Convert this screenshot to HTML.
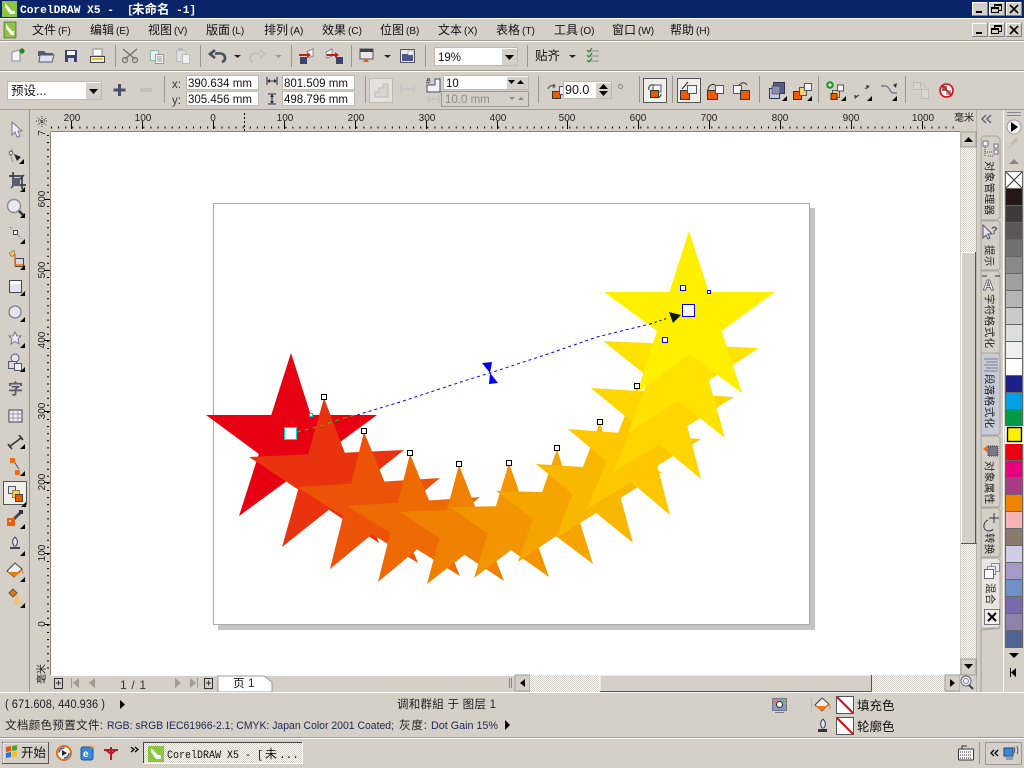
<!DOCTYPE html>
<html><head><meta charset="utf-8"><title>CorelDRAW X5</title>
<style>
html,body{margin:0;padding:0;background:#d4d0c8;overflow:hidden}
svg{display:block}
text{font-family:"Liberation Sans","WenQuanYi Zen Hei","Noto Sans CJK SC",sans-serif;font-size:12px;fill:#111}
.m{font-family:"Liberation Mono","WenQuanYi Zen Hei","Noto Sans CJK SC",monospace}
.mn text{font-size:12px}
.k{font-size:10px}
.r text{font-size:10px;fill:#222}
.f{font-size:11.5px;fill:#111}
.v text{font-size:10.5px;fill:#222;letter-spacing:.4px}
</style></head><body>
<svg xmlns="http://www.w3.org/2000/svg" width="1024" height="768" viewBox="0 0 1024 768">
<defs>
<pattern id="dith" width="2" height="2" patternUnits="userSpaceOnUse"><rect width="2" height="2" fill="#fff"/><rect width="1" height="1" fill="#d4d0c8"/><rect x="1" y="1" width="1" height="1" fill="#d4d0c8"/></pattern>
<g id="wbtn"><rect width="16" height="14" fill="#808080"/><rect width="15" height="13" fill="#fff"/><rect x="1" y="1" width="14" height="12" fill="#d4d0c8"/></g>
<g id="nofill"><rect x=".5" y=".5" width="17" height="17" fill="#fff" stroke="#555"/><path d="M1,1L17,17" stroke="#c8141c" stroke-width="2"/></g>
<g id="corner"><path d="M5,0V5H0Z" fill="#000"/></g>
</defs>
<rect width="1024" height="768" fill="#d4d0c8"/>

<!-- title bar -->
<rect width="1024" height="18" fill="#0a246a"/>
<rect x="2" y="1" width="15" height="16" fill="#8cc63f"/><path d="M5,3L12,11L15,11L15,14L10,14L5,7Z" fill="#fff"/>
<text x="20" y="13" class="m" style="font-size:11.2px;font-weight:bold;fill:#fff">CorelDRAW X5 -</text>
<text x="127" y="13" class="m" style="font-size:11.2px;font-weight:bold;fill:#fff">[</text>
<text x="132" y="13.5" style="font-size:12.5px;font-weight:bold;fill:#fff">未命名</text>
<text x="176" y="13" class="m" style="font-size:11.2px;font-weight:bold;fill:#fff">-1]</text>
<use href="#wbtn" x="972" y="2"/><use href="#wbtn" x="989" y="2"/><use href="#wbtn" x="1006" y="2"/>
<rect x="976" y="11" width="6" height="2" fill="#000"/>
<rect x="994.500" y="4.500" width="7" height="6" fill="none" stroke="#000"/><rect x="994" y="4" width="8" height="2" fill="#000"/><rect x="991.500" y="7.500" width="7" height="5" fill="#d4d0c8" stroke="#000"/><rect x="991" y="7" width="8" height="2" fill="#000"/>
<path d="M1010,5l8,8M1018,5l-8,8" stroke="#000" stroke-width="1.6"/>

<!-- menu bar -->
<rect y="18" width="1024" height="1" fill="#fff"/>
<rect x="4" y="22" width="12" height="16" fill="#8cc63f" stroke="#444" stroke-width=".6"/><path d="M6,24L12,31L14,31L14,35L11,35L6,28Z" fill="#fff"/>
<g class="mn">
<text x="32" y="34">文件<tspan class="k" dx="2">(F)</tspan></text>
<text x="90" y="34">编辑<tspan class="k" dx="2">(E)</tspan></text>
<text x="148" y="34">视图<tspan class="k" dx="2">(V)</tspan></text>
<text x="206" y="34">版面<tspan class="k" dx="2">(L)</tspan></text>
<text x="264" y="34">排列<tspan class="k" dx="2">(A)</tspan></text>
<text x="322" y="34">效果<tspan class="k" dx="2">(C)</tspan></text>
<text x="380" y="34">位图<tspan class="k" dx="2">(B)</tspan></text>
<text x="438" y="34">文本<tspan class="k" dx="2">(X)</tspan></text>
<text x="496" y="34">表格<tspan class="k" dx="2">(T)</tspan></text>
<text x="554" y="34">工具<tspan class="k" dx="2">(O)</tspan></text>
<text x="612" y="34">窗口<tspan class="k" dx="2">(W)</tspan></text>
<text x="670" y="34">帮助<tspan class="k" dx="2">(H)</tspan></text>
</g>
<use href="#wbtn" x="972" y="23"/><use href="#wbtn" x="989" y="23"/><use href="#wbtn" x="1006" y="23"/>
<rect x="976" y="32" width="6" height="2" fill="#000"/>
<rect x="994.500" y="25.500" width="7" height="6" fill="none" stroke="#000"/><rect x="994" y="25" width="8" height="2" fill="#000"/><rect x="991.500" y="28.500" width="7" height="5" fill="#d4d0c8" stroke="#000"/><rect x="991" y="28" width="8" height="2" fill="#000"/>
<path d="M1010,26l8,8M1018,26l-8,8" stroke="#000" stroke-width="1.6"/>
<rect y="40" width="1024" height="1" fill="#a09c94"/><rect y="41" width="1024" height="1" fill="#fff"/>
<rect y="70" width="1024" height="1" fill="#a09c94"/><rect y="71" width="1024" height="1" fill="#fff"/>
<rect y="109" width="1024" height="1" fill="#a09c94"/><rect y="110" width="1024" height="1" fill="#f4f2ec"/>

<!-- separators -->
<g fill="#fff" stroke="#a09c94" stroke-width="0">
<path d="M115,45h1v22h-1zM200,45h1v22h-1zM291,45h1v22h-1zM351,45h1v22h-1zM425,45h1v22h-1zM527,45h1v22h-1z" fill="#9a968e"/>
<path d="M164,76h1v27h-1zM365,76h1v27h-1zM538,76h1v27h-1zM639,76h1v27h-1zM672,76h1v27h-1zM759,76h1v27h-1zM818,76h1v27h-1zM905,76h1v27h-1z" fill="#9a968e"/>
</g>

<!-- standard toolbar icons -->
<path d="M12,52l8,-2v11h-8z" fill="#f4f4f6" stroke="#8a8aa0"/><circle cx="22" cy="51" r="2.6" fill="#1f8a1f"/>
<path d="M38,51h6l2,2h7v3h-15z" fill="#555a78"/><path d="M39,62h13l2,-7h-14z" fill="#dfe1ec" stroke="#555a78"/>
<rect x="65" y="50" width="12" height="12" fill="#3d4266"/><rect x="67" y="51" width="8" height="4" fill="#fff"/><rect x="68" y="58" width="6" height="4" fill="#cfd0dc"/>
<rect x="93" y="49" width="9" height="7" fill="#fff" stroke="#888"/><rect x="90.500" y="56.500" width="14" height="6" fill="#eee" stroke="#444"/><rect x="92" y="58" width="11" height="2" fill="#e8c040"/>
<path d="M123,49l12,10M137,49l-12,10" stroke="#777" stroke-width="1.4"/><circle cx="125" cy="60" r="2.500" fill="none" stroke="#777" stroke-width="1.3"/><circle cx="135" cy="60" r="2.500" fill="none" stroke="#777" stroke-width="1.3"/>
<rect x="150.500" y="50.500" width="8" height="10" fill="#e8f0ee" stroke="#8fb8b0"/><rect x="155.500" y="54.500" width="8" height="9" fill="#f2f2f2" stroke="#999"/><path d="M157,57h5M157,59h5M157,61h5" stroke="#999"/>
<rect x="176.500" y="50.500" width="9" height="11" fill="#ddd" stroke="#bbb"/><rect x="178" y="48" width="5" height="3" fill="#bbb"/><rect x="182.500" y="54.500" width="7" height="9" fill="#f2f2f2" stroke="#bbb"/>
<path d="M222,62c3,-1 4,-4 2,-7c-2,-2 -6,-2 -9,-1M215,50l-5,4l5,4" fill="none" stroke="#4a4e5e" stroke-width="2.600"/>
<path d="M234,55h7l-3.500,3z" fill="#222"/>
<path d="M253,62c-3,-1 -4,-4 -2,-7c2,-2 6,-2 9,-1M260,50l5,4l-5,4" fill="none" stroke="#c2c2bc" stroke-width="2.600"/>
<path d="M275,55h7l-3.500,3z" fill="#999"/>
<rect x="300" y="57" width="7" height="7" fill="#3d4266"/><path d="M306,52l7,-3v7l-5,2" fill="#fff" stroke="#888"/><path d="M299,54h8v-2l4,3l-4,3v-2h-8z" fill="#d01818"/>
<rect x="336" y="57" width="7" height="7" fill="#3d4266"/><path d="M326,52l6,-3v7l-5,2z" fill="#fff" stroke="#888"/><path d="M327,54h8v-2l4,3l-4,3v-2h-8z" fill="#d01818"/>
<rect x="360" y="49" width="13" height="10" fill="#e8e8ee" stroke="#555" /><rect x="360" y="49" width="13" height="3" fill="#444"/><path d="M363,62l3,-4l3,4z" fill="#ee5a10"/>
<path d="M384,55h7l-3.500,3z" fill="#222"/>
<rect x="400.500" y="49.500" width="14" height="13" fill="#e8e8f0" stroke="#556"/><rect x="402" y="54" width="11" height="7" fill="#4a5590"/><rect x="408" y="51" width="5" height="4" fill="#fff" stroke="#888" stroke-width=".5"/>
<rect x="434.500" y="47.500" width="83" height="18" fill="#fff" stroke="#bdb9b0"/><rect x="502" y="49" width="15" height="16" fill="#d4d0c8"/><path d="M505,55h9l-4.500,5z" fill="#000"/>
<text x="438" y="61" class="f">19%</text>
<text x="535" y="60" style="font-size:12.500px">贴齐</text><path d="M569,55h7l-3.500,3z" fill="#222"/>
<path d="M587,51h12M587,56h12M587,61h12" stroke="#8a8aa0"/><path d="M587,50l2,2l3,-4M587,55l2,2l3,-4M587,60l2,2l3,-4" fill="none" stroke="#2a8a2a" stroke-width="1.2"/>

<!-- property bar -->
<rect x="7.500" y="81.500" width="94" height="18" fill="#fff" stroke="#bdb9b0"/><rect x="86" y="83" width="15" height="16" fill="#d4d0c8"/><path d="M89,89h9l-4.500,5z" fill="#000"/>
<text x="11" y="95" style="font-size:12.500px">预设...</text>
<path d="M114,88h4.500v-4.500h3v4.500h4.500v3h-4.500v4.500h-3v-4.500h-4.500z" fill="#4a4e64" transform="translate(-.500,.500)"/>
<rect x="140" y="88" width="12" height="4" fill="#c2c0ba"/>
<text x="172" y="88" class="f" style="fill:#3a3a3a">x:</text><text x="172" y="104" class="f" style="fill:#3a3a3a">y:</text>
<rect x="186.500" y="75.500" width="72" height="14" fill="#fff" stroke="#bdb9b0"/><rect x="186.500" y="91.500" width="72" height="14" fill="#fff" stroke="#bdb9b0"/>
<text x="188" y="87" class="f">390.634 mm</text><text x="188" y="103" class="f">305.456 mm</text>
<rect x="282.500" y="75.500" width="72" height="14" fill="#fff" stroke="#bdb9b0"/><rect x="282.500" y="91.500" width="72" height="14" fill="#fff" stroke="#bdb9b0"/>
<text x="284" y="87" class="f">801.509 mm</text><text x="284" y="103" class="f">498.796 mm</text>
<path d="M267,77v8M277,77v8M268,81h8" stroke="#444a70" stroke-width="1.300"/><path d="M270,79l-3,2l3,2zM274,79l3,2l-3,2z" fill="#333"/>
<path d="M268,94h8M268,104h8M272,95v8" stroke="#444a70" stroke-width="1.300"/><path d="M270,97l2,-3l2,3zM270,101l2,3l2,-3z" fill="#333"/>
<rect x="369.500" y="78.500" width="23" height="24" fill="#e4e2dc" stroke="#bdb9b0"/><path d="M375,97v-5h4v-4h4v-4h5v13z" fill="#d8d6d0" stroke="#bbb"/>
<path d="M401,85v8M414,85v8M402,89h11" stroke="#bbb"/>
<path d="M427,85h2M427,79h3" stroke="#555"/><path d="M427,92h13v-13h-5v6h-8z" fill="#f4f4f6" stroke="#444a70" /><text x="426" y="84" style="font-size:8px;fill:#333">#</text>
<rect x="443.500" y="75.500" width="85" height="14" fill="#fff" stroke="#bdb9b0"/><rect x="507" y="77" width="21" height="12" fill="#d4d0c8"/><path d="M508,80h7l-3.500,4zM517,84h7l-3.500,-4z" fill="#000"/>
<text x="446" y="87" class="f">10</text>
<path d="M429,95v8M439,95v8M430,99h8" stroke="#bbb"/>
<rect x="441.500" y="91.500" width="87" height="15" fill="#d4d0c8" stroke="#999"/>
<text x="445" y="103" class="f" style="fill:#8c8a84">10.0 mm</text><path d="M509,97h6l-3,3z" fill="#8c8a84"/><path d="M518,100h6l-3,-3z" fill="#8c8a84"/>
<g id="ic1"><rect x="552.500" y="91.500" width="8" height="7" fill="#ee5a00" stroke="#333"/><rect x="559.500" y="86.500" width="8" height="8" fill="#f4f4f8" stroke="#556"/><path d="M548,89c1,-3 3,-4 6,-3M553,84l2,2l-2,2" fill="none" stroke="#444" /></g>
<rect x="563.500" y="81.500" width="48" height="17" fill="#fff" stroke="#bdb9b0"/><rect x="596" y="83" width="15" height="15" fill="#d4d0c8"/><path d="M599,89h9l-4.500,-5zM599,91h9l-4.500,5z" fill="#000"/>
<text x="565" y="94" style="font-size:12.500px">90.0</text>
<circle cx="620.500" cy="86.500" r="2" fill="none" stroke="#888"/>
<rect x="643.500" y="78.500" width="23" height="24" fill="#f1efe9" stroke="#555"/><rect x="653" y="85" width="8" height="7" fill="#f4f4f8" stroke="#556"/><rect x="650.500" y="90.500" width="8" height="7" fill="#ee5a00" stroke="#333"/><path d="M649,90c-1,-4 2,-6 5,-5M655,97c4,2 6,-1 6,-3" fill="none" stroke="#333"/>
<rect x="677.500" y="78.500" width="23" height="24" fill="#f1efe9" stroke="#555"/><rect x="680.500" y="90.500" width="9" height="9" fill="#ee5a00" stroke="#333"/><rect x="687.500" y="85.500" width="9" height="8" fill="#f4f4f8" stroke="#556"/><path d="M682,89l6,-7" stroke="#222"/>
<rect x="707.500" y="90.500" width="10" height="9" fill="#ee5a00" stroke="#333"/><rect x="715.500" y="85.500" width="8" height="8" fill="#f4f4f8" stroke="#556"/><path d="M708,90c0,-3 3,-7 7,-5" fill="none" stroke="#333"/>
<rect x="733.500" y="85.500" width="8" height="8" fill="#f4f4f8" stroke="#556"/><rect x="740.500" y="90.500" width="9" height="9" fill="#ee5a00" stroke="#333"/><path d="M739,85c3,-3 6,-3 8,0" fill="none" stroke="#333"/>
<rect x="773.500" y="82.500" width="11" height="11" fill="#5a5e86" stroke="#33364e"/><rect x="769.500" y="88.500" width="10" height="10" fill="#c8c8e2" stroke="#33364e"/><rect x="772" y="86" width="8" height="8" fill="#8a8cb0" stroke="#33364e" stroke-width=".6"/><use href="#corner" x="782" y="96"/>
<rect x="793.500" y="91.500" width="8" height="8" fill="#ee5a00" stroke="#333"/><rect x="799.500" y="87.500" width="7" height="8" fill="#f8d070" stroke="#555"/><rect x="804.500" y="83.500" width="7" height="7" fill="#f4f4f8" stroke="#556"/><use href="#corner" x="807" y="96"/>
<circle cx="830" cy="85" r="3.800" fill="#1f9a1f"/><path d="M828,85h4M830,83v4" stroke="#fff"/><rect x="832.500" y="90.500" width="7" height="7" fill="#f8d070" stroke="#555"/><rect x="837.500" y="85" width="6" height="6" fill="#f4f4f8" stroke="#556"/><rect x="831" y="93.500" width="6" height="6" fill="#ee5a00" stroke="#333"/><use href="#corner" x="841" y="96"/>
<path d="M855,98l4,-3M865,89l4,-3" stroke="#333"/><path d="M854,95l4,1l-3,3zM866,85l4,1l-3,3z" fill="#444"/><use href="#corner" x="867" y="96"/>
<path d="M881,86h5c3,0 4,7 7,7h4" fill="none" stroke="#556" /><path d="M893,85l4,-2l-1,5z" fill="#333"/><use href="#corner" x="892" y="96"/>
<rect x="913.500" y="82.500" width="7" height="7" fill="#d8d6d0" stroke="#bbb"/><rect x="921.500" y="89.500" width="7" height="9" fill="#d8d6d0" stroke="#bbb"/><path d="M921,84c3,0 4,1 4,4" fill="none" stroke="#bbb"/>
<circle cx="946.500" cy="90.500" r="6.500" fill="#f4f4f6" stroke="#d81820" stroke-width="1.700"/><rect x="942" y="86" width="5" height="5" fill="#777"/><rect x="946" y="90" width="5" height="5" fill="#aaa"/><path d="M942,85l10,11" stroke="#d81820" stroke-width="1.700"/>

<!-- canvas -->
<rect x="51" y="132" width="909" height="543" fill="#fff"/>
<rect x="218" y="208" width="597" height="422" fill="#c4c4c4"/>
<rect x="213.500" y="203.500" width="596" height="421" fill="#fff" stroke="#a8a8a8"/>

<!-- stars: pentagram point order T,BR,L,R,BL, nonzero fill -->
<g fill-rule="nonzero">
<polygon fill="#e60012" points="291,353 343,516 206,415 377,415 239,516"/>
<polygon fill="#e9330e" points="324,398 379,543 249,457 404,450 282,547"/>
<polygon fill="#ec5208" points="364,432 418,563 297,487 440,478 330,569"/>
<polygon fill="#ee6a02" points="410,454 460,576 347,506 480,497 378,582"/>
<polygon fill="#f08002" points="459,465 504,581 400,512 526,507 427,584"/>
<polygon fill="#f29500" points="509,463 549,577 450,507 571,505 474,578"/>
<polygon fill="#f6a500" points="557,449 593,564 496,491 618,494 518,562"/>
<polygon fill="#f9b800" points="600,422 633,543 536,464 662,472 556,538"/>
<polygon fill="#fdc800" points="637,386 670,515 568,429 701,439 587,509"/>
<polygon fill="#ffd500" points="665,340 701,479 591,388 734,397 613,473"/>
<polygon fill="#ffe200" points="683,288 725,438 603,341 759,348 628,433"/>
<polygon fill="#fff000" points="689,231 742,393 604,292 775,292 637,393"/>
</g>

<!-- blend controls -->
<path d="M297,432L317,427L347,417L355,415" fill="none" stroke="#12dc12" stroke-width="1" stroke-dasharray="4 4"/>
<path d="M357,415L400,402L467,380L490,373L548,354L597,337L650,324" fill="none" stroke="#0000ee" stroke-width="1" stroke-dasharray="3 3"/>
<path d="M650,324L668,318" fill="none" stroke="#000" stroke-dasharray="2 3"/>
<polygon points="482,363 492,362 490,373" fill="#0000f0"/><polygon points="490,373 489,384 498,383" fill="#0000f0"/>
<polygon points="669,312 681,315 673,323" fill="#0a1a0a"/>
<rect x="284.500" y="427.500" width="12" height="12" fill="#fff" stroke="#00d8d8"/>
<rect x="682.500" y="304.500" width="12" height="12" fill="#fff" stroke="#0000f0"/>
<rect x="309.500" y="413.500" width="3" height="3" fill="#fff" stroke="#00c8c8"/>
<g fill="#fff" stroke="#000">
<rect x="321.500" y="394.500" width="5" height="5"/><rect x="361.500" y="428.500" width="5" height="5"/><rect x="407.500" y="450.500" width="5" height="5"/><rect x="456.500" y="461.500" width="5" height="5"/><rect x="506.500" y="460.500" width="5" height="5"/><rect x="554.500" y="445.500" width="5" height="5"/><rect x="597.500" y="419.500" width="5" height="5"/><rect x="634.500" y="383.500" width="5" height="5"/>
</g>
<g fill="#fff" stroke="#0000f0">
<rect x="662.500" y="337.500" width="5" height="5"/><rect x="680.500" y="285.500" width="5" height="5"/><rect x="707.500" y="290.500" width="3" height="3"/>
</g>

<!-- rulers -->
<rect x="0" y="110" width="978" height="22" fill="#d4d0c8"/>
<rect x="30" y="110" width="21" height="582" fill="#d4d0c8"/>
<rect x="29" y="110" width="1" height="582" fill="#9a968e"/>
<rect x="50" y="132" width="1" height="543" fill="#8a867e"/>
<rect x="51" y="131" width="909" height="1" fill="#8a867e"/>
<path d="M50,127.500H958" stroke="#000" stroke-width="2" stroke-dasharray="1 6.100" stroke-dashoffset="-1"/>
<path d="M71.500,121v8M142.500,121v8M213.500,121v8M284.500,121v8M355.500,121v8M426.500,121v8M497.500,121v8M567.500,121v8M638.500,121v8M709.500,121v8M780.500,121v8M851.500,121v8M922.500,121v8" stroke="#000"/>
<path d="M244.500,113v18" stroke="#000" stroke-dasharray="2 2"/>
<g class="r" text-anchor="middle">
<text x="72" y="121">200</text><text x="143" y="121">100</text><text x="213" y="121">0</text><text x="285" y="121">100</text><text x="356" y="121">200</text><text x="427" y="121">300</text><text x="498" y="121">400</text><text x="567" y="121">500</text><text x="638" y="121">600</text><text x="709" y="121">700</text><text x="780" y="121">800</text><text x="851" y="121">900</text><text x="923" y="121">1000</text>
<text x="964" y="121">毫米</text>
</g>
<path d="M48,135V672" stroke="#000" stroke-width="2" stroke-dasharray="1 6.100"/>
<path d="M44,199.500h6M44,270.500h6M44,340.500h6M44,411.500h6M44,482.500h6M44,553.500h6M44,624.500h6" stroke="#000"/>
<g class="r" text-anchor="middle">
<text transform="translate(45,199) rotate(-90)">600</text>
<text transform="translate(45,270) rotate(-90)">500</text>
<text transform="translate(45,340) rotate(-90)">400</text>
<text transform="translate(45,411) rotate(-90)">300</text>
<text transform="translate(45,482) rotate(-90)">200</text>
<text transform="translate(45,553) rotate(-90)">100</text>
<text transform="translate(45,624) rotate(-90)">0</text>
<text transform="translate(45,674) rotate(-90)">毫米</text>
<text transform="translate(45,133) rotate(-90)">7</text>
</g>
<path d="M38,118l8,7M46,118l-8,7M42,116v11M36,121h11" stroke="#333" stroke-dasharray="1 1"/>

<!-- toolbox -->
<path d="M12,122v13l3,-3l2,5l3,-1l-2,-5h4z" fill="#f0f0f4" stroke="#7a7a90"/>
<path d="M12,149c-2,4 -2,8 1,13" fill="none" stroke="#8a8a98"/><circle cx="11" cy="153" r="1.800" fill="#fff" stroke="#555"/><path d="M14,154l7,3l-4,4z" fill="#222"/><use href="#corner" x="19" y="159"/>
<path d="M13,172v13h13M9,176h13v13" fill="none" stroke="#3a3e4e" stroke-width="1.700"/><path d="M11,188l13,-13" stroke="#3a3e4e" stroke-width="1.500"/><rect x="12" y="178" width="8" height="8" fill="#5a5e70"/><use href="#corner" x="20" y="187"/>
<circle cx="14" cy="206" r="6.500" fill="#e8e8f0" stroke="#8a8a98" stroke-width="1.400"/><path d="M19,211l4,4" stroke="#333" stroke-width="2.500"/><use href="#corner" x="20" y="213"/>
<path d="M10,227l12,12" stroke="#777" stroke-dasharray="2 2"/><rect x="13.500" y="230.500" width="4" height="4" fill="#fff" stroke="#445"/><use href="#corner" x="20" y="239"/>
<rect x="15.500" y="258.500" width="8" height="8" fill="#d8d8e4" stroke="#445"/><path d="M10,255h5v10h8" fill="none" stroke="#e87010" stroke-width="1.500"/><path d="M9,253l5,-3l1,4l-3,3z" fill="#f8c040" stroke="#555" stroke-width=".5"/><use href="#corner" x="20" y="265"/>
<rect x="9.500" y="280.500" width="12" height="12" fill="#e4e4f0" stroke="#445"/><rect x="10" y="281" width="11" height="3" fill="#fff"/><use href="#corner" x="20" y="291"/>
<circle cx="15" cy="312" r="6" fill="#e4e4f0" stroke="#667"/><use href="#corner" x="20" y="317"/>
<path d="M15,332l2,4h4l-3,3l1,5l-4,-2.500l-4,2.500l1,-5l-3,-3h4z" fill="#f0f0f4" stroke="#778"/><use href="#corner" x="20" y="343"/>
<circle cx="15" cy="358" r="4" fill="#e4e4f0" stroke="#556"/><rect x="8.500" y="361.500" width="8" height="7" fill="#d8d8e4" stroke="#556"/><rect x="14.500" y="363.500" width="7" height="7" fill="#eee" stroke="#556"/><use href="#corner" x="20" y="367"/>
<text x="8" y="394" style="font-size:15px;fill:#5c5c6a;font-weight:bold">字</text>
<rect x="9" y="410" width="13" height="12" fill="#f0f0f4" stroke="#556" stroke-width="1.200"/><path d="M9,414h13M9,418h13M13,410v12M18,410v12" stroke="#9a9aaa"/>
<path d="M9,447l12,-9" stroke="#333" stroke-width="1.600"/><path d="M8,444l4,5M19,435l4,5" stroke="#333" stroke-width="1.600"/><use href="#corner" x="20" y="444"/>
<path d="M13,460l6,9" stroke="#556"/><rect x="10" y="458" width="5" height="5" fill="#ee7010"/><rect x="15" y="470" width="5" height="5" fill="#ee7010"/><use href="#corner" x="20" y="471"/>
<rect x="3.500" y="481.500" width="23" height="23" fill="#f1efe9" stroke="#555"/>
<rect x="8.500" y="486.500" width="7" height="7" fill="#e8e8f0" stroke="#556"/><rect x="12.500" y="490.500" width="7" height="7" fill="#f8d060" stroke="#a08030"/><rect x="15.500" y="494.500" width="7" height="7" fill="#ee5a00" stroke="#444"/><use href="#corner" x="21" y="502" fill="#000"/>
<path d="M22,511l-8,8" stroke="#445" stroke-width="3"/><rect x="19" y="510" width="4" height="4" fill="#333"/><rect x="7" y="518" width="8" height="8" fill="#e86010"/><rect x="9" y="520" width="2" height="2" fill="#f8e0c0"/><use href="#corner" x="20" y="524"/>
<path d="M15,537c-3,3 -3,6 -1,9h2c2,-3 2,-6 -1,-9z" fill="#e4e4f0" stroke="#445"/><rect x="10" y="547" width="10" height="2" fill="#445"/><use href="#corner" x="20" y="551"/>
<path d="M15,563l-8,8l7,6l8,-8z" fill="#f0f0f4" stroke="#444"/><path d="M8,572h13l-7,5z" fill="#e87a10"/><path d="M20,570c2,0 3,1 3,4" stroke="#e87a10" fill="none"/><use href="#corner" x="20" y="577"/>
<path d="M13,589l-4,4l4,4l4,-4z" fill="#e87a10" stroke="#555"/><path d="M17,594l-4,10h9z" fill="#f4c070"/><use href="#corner" x="20" y="603"/>

<!-- bottom nav row -->
<rect x="51" y="675" width="909" height="17" fill="#d4d0c8"/>
<rect x="51" y="675" width="909" height="1" fill="#fff"/>
<g fill="none" stroke="#333"><rect x="54.500" y="678.500" width="8" height="10"/><path d="M56,683h5M58.500,680.500v5"/><rect x="204.500" y="678.500" width="8" height="10"/><path d="M206,683h5M208.500,680.500v5"/></g>
<path d="M71.500,678v10" stroke="#a09c94"/><path d="M79,678v10l-6,-5zM95,678v10l-6,-5z" fill="#a09c94"/>
<path d="M175,678v10l6,-5zM190,678v10l6,-5z" fill="#a09c94"/><path d="M197.500,678v10" stroke="#a09c94"/>
<text x="120" y="689" textLength="26" style="fill:#333;font-size:12px">1 / 1</text>
<path d="M218,692V676H264L272,682V692Z" fill="#fff" stroke="#999"/>
<text x="233" y="687" style="font-size:11.500px">页</text><text x="248" y="687" style="font-size:11.500px;fill:#222">1</text>
<path d="M509.500,678v10M511.500,678v10" stroke="#888"/>
<rect x="515" y="675" width="15" height="16" fill="#d4d0c8" stroke="#a09c94"/><path d="M525,679v8l-5,-4z" fill="#000"/>
<rect x="530" y="675" width="416" height="17" fill="url(#dith)"/>
<rect x="600" y="675" width="271" height="16" fill="#d4d0c8"/><path d="M600,675h271M600,675v16" stroke="#fff"/><path d="M600,691.500h271.500M871.500,675v16" stroke="#555"/>
<rect x="945" y="675" width="15" height="16" fill="#d4d0c8" stroke="#a09c94"/><path d="M950,679v8l5,-4z" fill="#000"/>
<rect x="960" y="675" width="16" height="17" fill="#d4d0c8"/>
<circle cx="966" cy="681" r="5" fill="#eef" stroke="#667"/><circle cx="966" cy="681" r="2.500" fill="none" stroke="#888"/><path d="M969,685l4,4" stroke="#444" stroke-width="2"/>

<!-- vertical scrollbar -->
<rect x="960" y="132" width="17" height="543" fill="#d4d0c8"/>
<rect x="961" y="132" width="15" height="527" fill="url(#dith)"/>
<rect x="961" y="132" width="15" height="15" fill="#d4d0c8" stroke="#a09c94"/><path d="M964,142h9l-4.500,-5z" fill="#000"/>
<rect x="961" y="252" width="15" height="292" fill="#d4d0c8"/><path d="M961,252.500h15M961.500,252v292" stroke="#fff"/><path d="M961,543.500h15.500M975.500,252v292" stroke="#555"/>
<rect x="961" y="659" width="15" height="16" fill="#d4d0c8" stroke="#a09c94"/><path d="M964,664h9l-4.500,5z" fill="#000"/>
<rect x="976.500" y="110" width="1" height="582" fill="#9a968e"/>

<!-- docker -->
<rect x="977" y="110" width="26" height="582" fill="#d4d0c8"/>
<path d="M984,115l-4,4l4,4M989,115l-4,4l4,4" transform="translate(2,0)" fill="none" stroke="#667" stroke-width="1.500"/>
<path d="M981,692V630l19,-2" fill="none" stroke="#a09c94"/>
<g fill="#d4d0c8" stroke="#a8a49c">
<path d="M981,139l2,-3h14l3,3v78l-3,3h-16z"/>
<path d="M981,221h17l2,2v46l-2,1h-17z"/>
<path d="M981,271h17l2,2v80h-19z"/>
<path d="M981,353h17l2,2v78l-2,2h-17z" fill="#c6cbd8"/>
<path d="M981,436h17l2,2v68l-2,1h-17z"/>
<path d="M981,508h17l2,2v46l-2,1h-17z"/>
<path d="M981,558h17l2,2v66l-2,2h-17z" fill="#e9e6df"/>
</g>
<rect x="983" y="141" width="5" height="5" fill="#f0f0f4" stroke="#445" stroke-width=".7"/><rect x="994" y="144" width="4" height="4" fill="#f0f0f4" stroke="#445" stroke-width=".7"/><rect x="994" y="150" width="4" height="4" fill="#f0f0f4" stroke="#445" stroke-width=".7"/><path d="M985,147v9M988,156h6M985,152h8" stroke="#445" stroke-dasharray="1 1"/>
<path d="M983,225v13l3,-3l2,4l2,-1l-2,-4h4z" fill="#e4e4f0" stroke="#556"/><text x="991" y="234" style="font-size:11px;font-weight:bold;fill:#556">?</text>
<text x="983" y="290" style="font-size:15px;font-weight:bold;fill:#fff;stroke:#445;stroke-width:.7">A</text><path d="M982,276h5M995,276h5" stroke="#334"/>
<path d="M984,359h14M986,362h12M984,365h14M986,368h12M984,371h14" stroke="#7a7e90"/>
<rect x="988" y="446" width="10" height="10" fill="#778" /><path d="M988,446h10v10h-10z" fill="none" stroke="#334" stroke-dasharray="1 1"/><path d="M983,449l5,-4v8z" fill="#e87010"/>
<path d="M988,520c-5,2 -6,10 0,11c2,0 4,0 5,-2" fill="none" stroke="#334"/><path d="M994,513v10M989,518h10" stroke="#334"/>
<rect x="991.500" y="563.500" width="8" height="8" fill="#e8e8f0" stroke="#889"/><rect x="987.500" y="566.500" width="8" height="8" fill="#eee" stroke="#889"/><rect x="984.500" y="569.500" width="9" height="9" fill="#fff" stroke="#667"/>
<g class="v">
<text transform="translate(986,161) rotate(90)">对象管理器</text>
<text transform="translate(986,245) rotate(90)">提示</text>
<text transform="translate(986,294) rotate(90)">字符格式化</text>
<text transform="translate(986,374) rotate(90)">段落格式化</text>
<text transform="translate(986,461) rotate(90)">对象属性</text>
<text transform="translate(986,533) rotate(90)">转换</text>
<text transform="translate(987,583) rotate(90)">混合</text>
</g>
<rect x="984.500" y="609.500" width="15" height="15" fill="#f1efe9" stroke="#777"/><path d="M988,613l8,8M996,613l-8,8" stroke="#000" stroke-width="2"/>

<!-- palette -->
<rect x="1003" y="110" width="21" height="582" fill="#d4d0c8"/>
<rect x="1003" y="110" width="1" height="582" fill="#fff"/>
<path d="M1007,112.500h14M1007,115.500h14" stroke="#888"/>
<circle cx="1014" cy="127" r="7" fill="#f2f2f2" stroke="#999"/><path d="M1011,122v10l7,-5z" fill="#000"/>
<path d="M1017,139l-6,6" stroke="#bdb9b0" stroke-width="3"/><path d="M1012,144l-3,4" stroke="#c8c4bc" stroke-width="2"/>
<path d="M1009,164h10l-5,-5z" fill="#888"/>
<rect x="1005" y="171" width="18" height="476" fill="#444"/>
<g stroke="#666" stroke-width="1">
<rect x="1005.500" y="171.500" width="17" height="17" fill="#fff"/>
<rect x="1005.500" y="188.500" width="17" height="17" fill="#231815"/>
<rect x="1005.500" y="205.500" width="17" height="17" fill="#3e3a39"/>
<rect x="1005.500" y="222.500" width="17" height="17" fill="#595757"/>
<rect x="1005.500" y="239.500" width="17" height="17" fill="#727171"/>
<rect x="1005.500" y="256.500" width="17" height="17" fill="#898989"/>
<rect x="1005.500" y="273.500" width="17" height="17" fill="#9fa0a0"/>
<rect x="1005.500" y="290.500" width="17" height="17" fill="#b5b5b6"/>
<rect x="1005.500" y="307.500" width="17" height="17" fill="#c9caca"/>
<rect x="1005.500" y="324.500" width="17" height="17" fill="#dcdddd"/>
<rect x="1005.500" y="341.500" width="17" height="17" fill="#efefef"/>
<rect x="1005.500" y="358.500" width="17" height="17" fill="#ffffff"/>
<rect x="1005.500" y="375.500" width="17" height="17" fill="#1d2088"/>
<rect x="1005.500" y="392.500" width="17" height="17" fill="#00a0e9"/>
<rect x="1005.500" y="409.500" width="17" height="17" fill="#009944"/>
<rect x="1005.500" y="443.500" width="17" height="17" fill="#e60012"/>
<rect x="1005.500" y="460.500" width="17" height="17" fill="#e4007f"/>
<rect x="1005.500" y="477.500" width="17" height="17" fill="#a73d84"/>
<rect x="1005.500" y="494.500" width="17" height="17" fill="#f08300"/>
<rect x="1005.500" y="511.500" width="17" height="17" fill="#f5b2b2"/>
<rect x="1005.500" y="528.500" width="17" height="17" fill="#8a7a6c"/>
<rect x="1005.500" y="545.500" width="17" height="17" fill="#cfcde3"/>
<rect x="1005.500" y="562.500" width="17" height="17" fill="#a59aca"/>
<rect x="1005.500" y="579.500" width="17" height="17" fill="#7090c8"/>
<rect x="1005.500" y="596.500" width="17" height="17" fill="#7a6aad"/>
<rect x="1005.500" y="613.500" width="17" height="17" fill="#8f82aa"/>
<rect x="1005.500" y="630.500" width="17" height="17" fill="#4f6594"/>
</g>
<path d="M1006,172l16,16M1022,172l-16,16" stroke="#333"/>
<rect x="1005" y="426" width="19" height="18" fill="#fff"/><rect x="1007.500" y="427.500" width="14" height="14" fill="#fff000" stroke="#000" stroke-width="1.400"/>
<path d="M1009,653h10l-5,5z" fill="#000"/>
<path d="M1011,668v9l-5,-4.500z" fill="#000" transform="translate(5,0)"/><path d="M1010.500,668v9" stroke="#000"/>

<!-- status bar -->
<rect y="692" width="1024" height="1" fill="#fff"/>
<text x="5" y="708" textLength="100" lengthAdjust="spacingAndGlyphs" style="font-size:11.500px;fill:#222">( 671.608, 440.936 )</text>
<path d="M120,700v9l5,-4.500z" fill="#000"/>
<text x="397" y="708" textLength="99" style="font-size:11.500px;fill:#222">调和群組 于 图层 1</text>
<text x="5" y="729" textLength="98" style="font-size:11.500px;fill:#222">文档颜色预置文件:</text>
<text x="107" y="729" textLength="287" lengthAdjust="spacingAndGlyphs" style="font-size:11.300px;fill:#1c2850">RGB: sRGB IEC61966-2.1; CMYK: Japan Color 2001 Coated;</text>
<text x="399" y="729" textLength="28" style="font-size:11.500px;fill:#222">灰度:</text>
<text x="431" y="729" textLength="67" lengthAdjust="spacingAndGlyphs" style="font-size:11.300px;fill:#1c2850">Dot Gain 15%</text>
<path d="M505,720v10l5,-5z" fill="#000"/>
<rect x="772.500" y="698.500" width="14" height="12" fill="#8a9ac0" stroke="#778"/><rect x="773" y="699" width="4" height="5" fill="#d08080"/><rect x="782" y="699" width="4" height="5" fill="#80b080"/><circle cx="779.500" cy="704.500" r="3" fill="#fff" stroke="#333"/><path d="M775,712.500h9" stroke="#778"/>
<path d="M811.500,698v14" stroke="#bbb"/>
<path d="M822,698l-7,7l7,6l7,-7z" fill="#f0f0f4" stroke="#444"/><path d="M815,706h13l-6,5z" fill="#e87a10"/><path d="M828,704c2,0 2,2 2,5" stroke="#e87a10" fill="none"/>
<use href="#nofill" x="836" y="696"/><text x="857" y="710" style="font-size:12.500px">填充色</text>
<path d="M823,719c-3,3 -3,6 -1,9h2c2,-3 2,-6 -1,-9z" fill="#e4e4f0" stroke="#445"/><rect x="818" y="729" width="9" height="3" fill="#334"/>
<use href="#nofill" x="836" y="717"/><text x="857" y="731" style="font-size:12.500px">轮廓色</text>
<rect y="737" width="1024" height="1" fill="#a09c94"/><rect y="738" width="1024" height="1" fill="#fff"/>

<!-- taskbar -->
<rect x="2.500" y="742.500" width="46" height="21" fill="#d4d0c8" stroke="#555"/><path d="M3,743h45M3,743v20" stroke="#fff"/>
<path d="M6,747l5,-1v5l-5,1z" fill="#e05020"/><path d="M12,746l5,-1v5l-5,1z" fill="#50a030"/><path d="M6,753l5,-1v5l-5,1z" fill="#3070d0"/><path d="M12,752l5,-1v5l-5,1z" fill="#f0c020"/>
<text x="21" y="757" style="font-size:12.500px">开始</text>
<circle cx="64" cy="753" r="7" fill="#fff" stroke="#e07010" stroke-width="2"/><circle cx="64" cy="753" r="5" fill="none" stroke="#2060c0" stroke-width="1.500" stroke-dasharray="8 8"/><path d="M62,750v6l5,-3z" fill="#222"/>
<rect x="81" y="747" width="12" height="13" rx="2" fill="#3a88d8" stroke="#1a50a0"/><text x="83" y="757" style="font-size:10px;fill:#fff;font-weight:bold">e</text><path d="M90,746l4,2" stroke="#e0a020" stroke-width="2"/>
<path d="M104,750h14M111,747v13M106,750l5,4l5,-4" fill="none" stroke="#c01828" stroke-width="2"/>
<path d="M131,747l3,2.500l-3,2.500M135,747l3,2.500l-3,2.500" fill="none" stroke="#000" stroke-width="1.200"/>
<rect x="143.500" y="742.500" width="159" height="21" fill="url(#dith)" stroke="#fff"/><path d="M143.500,763V742.500H302" stroke="#444" fill="none"/>
<rect x="148" y="746" width="16" height="16" fill="#8cc63f"/><path d="M151,748L158,755L161,755L161,759L156,759L151,752Z" fill="#fff"/>
<text x="167" y="758" class="m" textLength="96" lengthAdjust="spacingAndGlyphs" style="font-size:11px;fill:#111">CorelDRAW X5 - [</text><text x="265" y="758" style="font-size:12px">未</text><text x="279" y="758" class="m" style="font-size:11px;fill:#111">...</text>
<rect x="958.500" y="749" width="15" height="11" rx="1" fill="#f8f8f8" stroke="#333"/><path d="M960,752h12M960,755h12M960,758h12" stroke="#333" stroke-dasharray="1 1"/><path d="M962,749v-3h5" stroke="#333" fill="none"/>
<path d="M979.500,742v22" stroke="#9a968e"/>
<rect x="985.500" y="742.500" width="36" height="22" fill="none" stroke="#999"/>
<path d="M994,750l-3,3l3,3M998,750l-3,3l3,3" fill="none" stroke="#000" stroke-width="1.300"/>
<rect x="1004" y="748" width="9" height="8" fill="#3a88d8" stroke="#246"/><rect x="1006" y="757" width="7" height="3" fill="#8a9ac0"/><path d="M1014,747c1,2 1,4 0,6M1017,746c1,3 1,6 0,8" fill="none" stroke="#556"/>
</svg>
</body></html>
